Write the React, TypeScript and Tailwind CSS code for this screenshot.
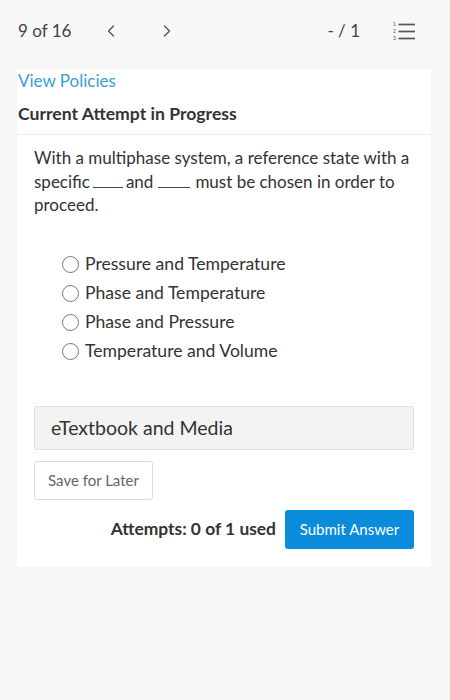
import { ChevronLeft, ChevronRight } from "lucide-react";

const OPTIONS = [
  "Pressure and Temperature",
  "Phase and Temperature",
  "Phase and Pressure",
  "Temperature and Volume",
];

function NumberedListIcon() {
  return (
    <svg width="24" height="20" viewBox="0 0 24 20" className="text-[#555]">
      <text x="1" y="5" fontSize="5" fill="currentColor" fontFamily="Lato, sans-serif">1</text>
      <text x="1" y="12" fontSize="5" fill="currentColor" fontFamily="Lato, sans-serif">2</text>
      <text x="1" y="19" fontSize="5" fill="currentColor" fontFamily="Lato, sans-serif">3</text>
      <line x1="6.5" y1="3.5" x2="23" y2="3.5" stroke="currentColor" strokeWidth="1.7" />
      <line x1="6.5" y1="10.5" x2="23" y2="10.5" stroke="currentColor" strokeWidth="1.7" />
      <line x1="6.5" y1="17.5" x2="23" y2="17.5" stroke="currentColor" strokeWidth="1.7" />
    </svg>
  );
}

function Blank({ w }: { w: number }) {
  return (
    <span
      className="inline-block border-b border-[#444] mx-[3px] h-[14px] align-baseline"
      style={{ width: w }}
    />
  );
}

export default function App() {
  return (
    <div className="min-h-[700px] bg-[#f7f7f7] text-[#333] font-['Lato','Open_Sans',sans-serif]">
      <header className="h-[62px] flex items-center px-[18px] text-[17px] text-[#444]">
        <span>9 of 16</span>
        <ChevronLeft className="ml-[30px] h-[20px] w-[20px] text-[#555]" strokeWidth={1.6} />
        <ChevronRight className="ml-[36px] h-[20px] w-[20px] text-[#555]" strokeWidth={1.6} />
        <span className="ml-auto mr-[32px]">- / 1</span>
        <span className="mr-[16px]">
          <NumberedListIcon />
        </span>
      </header>

      <main className="ml-[17px] mr-[19px] mt-[7px] bg-white pb-[18px]">
        <div className="px-px">
          <a className="block leading-[24px] text-[17px] text-[#3a9fd1]">View Policies</a>
          <h2 className="mt-[9px] leading-[24px] text-[17.6px] font-bold text-[#333]">Current Attempt in Progress</h2>
        </div>
        <div className="mt-[8px] border-b border-[#ebebeb]" />

        <section className="px-[17px]">
          <p className="mt-[11px] text-[17px] leading-[23.5px]">
            With a multiphase system, a reference state with a specific<Blank w={30} />and<span className="inline-block w-[2px]" /><Blank w={32} /><span className="inline-block w-[2px]" />must be chosen in order to proceed.
          </p>

          <ul className="mt-[33px] pl-[28px]">
            {OPTIONS.map((opt) => (
              <li key={opt} className="h-[29px] flex items-center gap-[6px] text-[17.6px]">
                <span className="w-[17px] h-[17px] rounded-full border-[1.5px] border-[#777] bg-white" />
                <span>{opt}</span>
              </li>
            ))}
          </ul>

          <div className="mt-[40px] h-[44px] flex items-center pl-[16px] rounded-[3px] border border-[#dedede] bg-[#f3f3f3] text-[19.5px] text-[#333]">
            eTextbook and Media
          </div>

          <button className="mt-[11px] h-[39px] w-[119px] rounded-[3px] border border-[#dcdcdc] bg-white text-[15px] text-[#666]">
            Save for Later
          </button>

          <div className="mt-[10px] flex items-center justify-end gap-[9px]">
            <span className="text-[17.4px] font-bold text-[#333]">Attempts: 0 of 1 used</span>
            <button className="h-[39px] w-[129px] rounded-[3px] bg-[#0b8bdb] text-[15px] text-white">
              Submit Answer
            </button>
          </div>
        </section>
      </main>
    </div>
  );
}
